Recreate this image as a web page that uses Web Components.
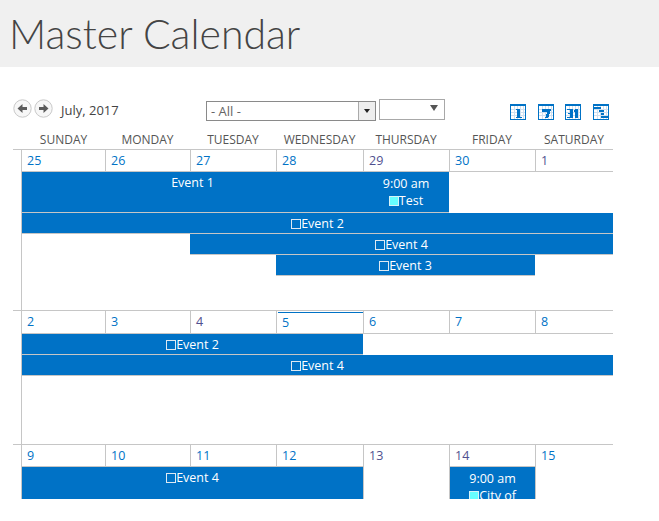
<!DOCTYPE html>
<html><head><meta charset="utf-8"><style>
html,body{margin:0;padding:0;background:#fff;overflow:hidden}
</style></head><body>
<mc-page></mc-page>
<script>
const FONT='"Open Sans","Noto Sans",sans-serif';
const LINE='#c6c6c6', BLUE='#0072c6';
const COLS='83px 85px 86px 87px 86px 86px 78px';
class Base extends HTMLElement{
  connectedCallback(){ if(!this.shadowRoot){ this.attachShadow({mode:'open'}).innerHTML=this.render(); } }
}
class McTitle extends Base{render(){return `<style>
:host{display:block;height:67px;background:#f0f0f0;padding-left:9px;box-sizing:border-box;overflow:hidden}
div{font:300 41px/67px Lato,${FONT};color:#444;white-space:nowrap}
</style><div><slot></slot></div>`}}
class McNavBtn extends Base{render(){const r=this.getAttribute('dir')==='r';return `<style>
:host{display:block;width:19px;height:19px}svg{display:block}
</style><svg width="19" height="19" viewBox="0 0 19 19"><circle cx="9.5" cy="9.500" r="8.700" fill="#f7f7f7" stroke="#c8c8c8"/>
<path d="${r?'M5 8h4.500V5l5 4.500-5 4.500v-3H5z':'M14 8H9.500V5l-5 4.500 5 4.500v-3H14z'}" fill="#5c5c5c"/></svg>`}}
class McViewIcon extends Base{render(){const k=this.getAttribute('kind');
const glyph={
 '1':'<path d="M6 4.500h4v8h1.500V14h-6v-1.500H7V6H6z"/>',
 '7':'<path d="M4 4.500h8.500V7L10 14H7l2.500-6.500H4z"/>',
 '31':'<path d="M2 4.500h5.500V14H2v-1.500h3V10H3V8.500h2V6H2zM9 6h1V4.500h3V14h-3V7.500H9z"/>',
 'g':'<path d="M1 3h7v2H1zM6 6h5v2H6zM8 9h3v1.500H8zM8 11.500h7V14H8z"/>'}[k];
return `<style>:host{display:block;width:16px;height:16px}svg{display:block}</style>
<svg width="16" height="16" viewBox="0 0 16 16" shape-rendering="crispEdges"><rect width="16" height="16" fill="#0072c6"/><rect x="1" y="2" width="14" height="13" fill="#fff"/>
<path d="M1 5.500h14M1 8.500h14M1 11.500h14M4.500 2v13M7.500 2v13M10.500 2v13M13.500 2v13" stroke="#cfe0f0" fill="none"/>
<g fill="#0072c6">${glyph}</g></svg>`}}
class McToolbar extends Base{render(){return `<style>
:host{display:flex;height:64px;padding:0 0 0 13px;box-sizing:border-box;align-items:flex-start;font:13px/18px ${FONT};color:#444;white-space:nowrap}
.nav{display:flex;gap:2px;width:48px;flex:none;margin-top:32px}
.label{width:145px;flex:none;margin-top:34px}
.sel{display:flex;width:170px;height:20px;border:1px solid #8a8a8a;box-sizing:border-box;margin-top:34px;flex:none}
.sel span{flex:1;color:#666;padding-left:4px;line-height:19px}
.btn{width:16px;border-left:1px solid #aaa;background:#eee;display:flex;align-items:center;justify-content:center}
.tri{width:0;height:0;border:3px solid transparent;border-top:4px solid #222;border-bottom:0}
.sel2{width:66px;height:21px;border:1px solid #a8a8a8;box-sizing:border-box;margin:32px 0 0 3px;display:flex;justify-content:flex-end;padding:5px 6px 0 0;flex:none}
.tri2{border:4px solid transparent;border-top:6px solid #555;border-bottom:0;width:0;height:0}
.views{display:flex;gap:12px;margin:37px 0 0 65px}
.views mc-view-icon:nth-child(2){margin-right:-1px}
</style>
<div class="nav"><mc-nav-btn dir="l"></mc-nav-btn><mc-nav-btn dir="r"></mc-nav-btn></div>
<div class="label">July, 2017</div>
<div class="sel"><span>- All -</span><div class="btn"><div class="tri"></div></div></div>
<div class="sel2"><div class="tri2"></div></div>
<div class="views"><mc-view-icon kind="1"></mc-view-icon><mc-view-icon kind="7"></mc-view-icon><mc-view-icon kind="31"></mc-view-icon><mc-view-icon kind="g"></mc-view-icon></div>`}}
class McHead extends Base{render(){return `<style>
:host{display:grid;grid-template-columns:${COLS};margin-left:22px;height:18px;width:591px;font:12px/18px ${FONT};color:#555;text-align:center;white-space:nowrap}
</style>${['SUNDAY','MONDAY','TUESDAY','WEDNESDAY','THURSDAY','FRIDAY','SATURDAY'].map(d=>`<span>${d}</span>`).join('')}`}}
class McEvent extends Base{render(){const s=+this.getAttribute('start'),e=+this.getAttribute('end');return `<style>
:host{display:block;grid-column:${s}/${e};${this.hasAttribute('row')?`grid-row:${this.getAttribute('row')};`:''}background:${BLUE};color:#fff;text-align:center;font:12.500px/17px ${FONT};white-space:nowrap;overflow:hidden;padding-top:2px;box-sizing:border-box;border-bottom:1px solid ${LINE}}
:host([timed]){padding-top:3px}
:host([cut]){border-bottom:0}
:host([inset]){margin-left:1px;overflow:visible;box-shadow:-1px 0 0 ${LINE}}
</style><slot></slot>`}}
class McBox extends Base{render(){const f=this.hasAttribute('fill');return `<style>
:host{display:inline-block;width:8px;height:8px;border:1px solid ${f?'#d5f3f8':'#dfe9f2'};background:${f?'#66ffff':'transparent'};vertical-align:-1px}
</style>`}}
class McWeek extends Base{render(){const h=this.getAttribute('h');const days=this.getAttribute('days').split(',');const today=+this.getAttribute('today');const dh=today>=0?23:22;
const visited=(this.getAttribute('visited')||'').split(',');const open=(this.getAttribute('open')||'').split(',');
const rows=this.getAttribute('rows')||'21px 21px';
return `<style>
:host{display:block;box-sizing:border-box;margin-left:13px;width:600px;height:${h}px;border-top:1px solid ${LINE};padding-left:8px;overflow:hidden}
.g{display:grid;grid-template-columns:${COLS};grid-template-rows:${dh}px ${rows};border-left:1px solid ${LINE};height:100%;width:592px;box-sizing:border-box}
.d{grid-row:1;height:${dh}px;box-sizing:border-box;border-bottom:1px solid ${LINE};border-left:1px solid ${LINE};padding-left:5px;font:12.500px/21px ${FONT};color:${BLUE}}
.d:first-child{border-left:0}
.d.v{color:#50508f}
.d.t{position:relative;line-height:24px}
.d.t i{position:absolute;left:1px;right:0;top:1px;height:1px;background:${BLUE}}
.d.n{border-bottom:0;grid-row:1/3;height:auto}
</style><div class="g">${days.map((d,i)=>`<div class="d${i===today?' t':''}${visited.includes(d)?' v':''}${open.includes(d)?' n':''}" style="grid-column:${i+1}">${i===today?'<i></i>':''}${d}</div>`).join('')}<slot></slot></div>`}}
class McPage extends Base{render(){return `<style>
:host{display:block;width:659px;height:499px;overflow:hidden}
</style>
<mc-title>Master Calendar</mc-title>
<mc-toolbar></mc-toolbar>
<mc-head></mc-head>
<mc-week h="161" today="-1" days="25,26,27,28,29,30,1" visited="29,1" rows="41px 21px 21px 21px">
<mc-event start="1" end="5" row="2">Event 1</mc-event>
<mc-event start="5" end="6" row="2" timed>9:00 am<br><mc-box fill></mc-box>Test</mc-event>
<mc-event start="1" end="8" row="3"><mc-box></mc-box>Event 2</mc-event>
<mc-event start="3" end="8" row="4"><mc-box></mc-box>Event 4</mc-event>
<mc-event start="4" end="7" row="5"><mc-box></mc-box>Event 3</mc-event>
</mc-week>
<mc-week h="134" today="3" days="2,3,4,5,6,7,8" visited="4" rows="21px 21px">
<mc-event start="1" end="5" row="2"><mc-box></mc-box>Event 2</mc-event>
<mc-event start="1" end="8" row="3"><mc-box></mc-box>Event 4</mc-event>
</mc-week>
<mc-week h="55" today="-1" days="9,10,11,12,13,14,15" visited="13,14" open="13,15" rows="1fr">
<mc-event start="1" end="5" row="2" cut><mc-box></mc-box>Event 4</mc-event>
<mc-event start="6" end="7" row="2" cut timed inset>9:00 am<br><mc-box fill></mc-box>City of</mc-event>
</mc-week>`}}
customElements.define('mc-title',McTitle);
customElements.define('mc-nav-btn',McNavBtn);
customElements.define('mc-view-icon',McViewIcon);
customElements.define('mc-toolbar',McToolbar);
customElements.define('mc-head',McHead);
customElements.define('mc-event',McEvent);
customElements.define('mc-box',McBox);
customElements.define('mc-week',McWeek);
customElements.define('mc-page',McPage);
</script>
</body></html>
